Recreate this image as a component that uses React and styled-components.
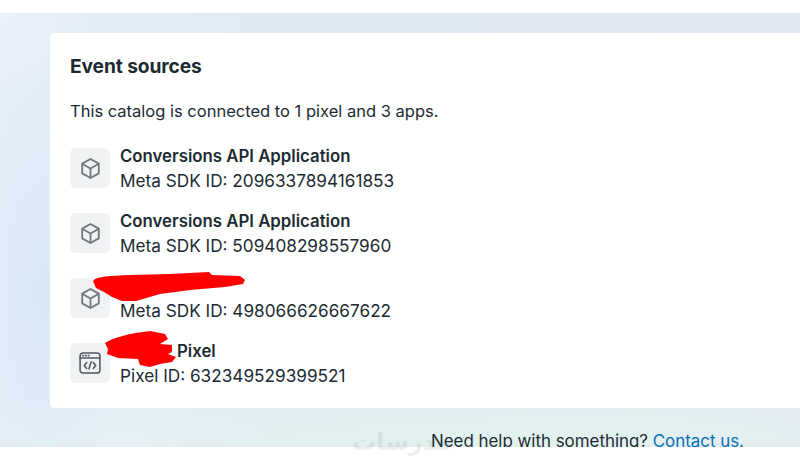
import React from 'react';
import styled, { createGlobalStyle } from 'styled-components'

const Global = createGlobalStyle`
  html, body {
    margin: 0;
    background: #fff;
  }
`

const Page = styled.div`
  position: relative;
  width: 800px;
  height: 460px;
  overflow: hidden;
  padding-top: 13px;
  box-sizing: border-box;
  font-family: Inter, "Noto Sans", sans-serif;
  color: #1c2b33;
`

const Backdrop = styled.div`
  height: 434px;
  overflow: hidden;
  padding: 20px 0 0 50px;
  box-sizing: border-box;
  background:
    radial-gradient(90px 90px at 0 0, #ebf0f9 0, rgba(235, 240, 249, 0) 100%),
    radial-gradient(90px 240px at 45px 280px, #dbe9f6 0, rgba(219, 233, 246, 0) 100%),
    radial-gradient(600px 80px at 65% 100%, #e3f2ee 0, rgba(227, 242, 238, 0) 100%),
    radial-gradient(220px 50px at 60px 100%, #e9f1f8 0, rgba(233, 241, 248, 0) 100%),
    linear-gradient(90deg, #e4eef7 0%, #dfe9f2 50%, #e3e9f4 100%);
`

const Card = styled.section`
  height: 375px;
  box-sizing: border-box;
  padding: 20px;
  background: #fff;
  border-radius: 4px 0 0 4px;
`

const Title = styled.h2`
  margin: 0;
  font-size: 19.2px;
  line-height: 27px;
  font-weight: 650;
  letter-spacing: -0.1px;
`

const Intro = styled.p`
  margin: 19px 0 21px;
  font-size: 16.5px;
  line-height: 24px;
`

const SourceList = styled.ul`
  list-style: none;
  margin: 0;
  padding: 0;
  display: flex;
  flex-direction: column;
  gap: 16px;
`

const SourceRow = styled.li`
  display: flex;
  align-items: flex-start;
  gap: 10px;
`

const IconTile = styled.div`
  width: 40px;
  height: 40px;
  margin-top: 4px;
  border-radius: 6px;
  background: #f1f2f4;
  color: #72797f;
  display: flex;
  align-items: center;
  justify-content: center;
`

const SourceText = styled.div`
  display: flex;
  flex-direction: column;
`

const SourceName = styled.span`
  height: 24px;
  font-size: 16.8px;
  line-height: 24px;
  font-weight: 600;
`

const PixelName = styled(SourceName)`
  padding-left: 57px;
`

const SourceId = styled.span`
  font-size: 17.2px;
  line-height: 25px;
`

const Help = styled.p`
  margin: 21px 0 0 381px;
  font-size: 16.9px;
  line-height: 24px;
  white-space: nowrap;
`

const HelpLink = styled.a`
  color: #0a70b8;
`

const Watermark = styled.span`
  position: absolute;
  left: 352px;
  top: 426px;
  font-family: "DejaVu Sans", sans-serif;
  font-size: 24px;
  line-height: 32px;
  font-weight: 700;
  color: rgba(120, 120, 120, 0.12);
`

const Scribble = styled.svg`
  position: absolute;
  left: 0;
  top: 0;
  pointer-events: none;
`

const BoxIcon = () => (
  <svg width="23" height="23" viewBox="0 0 20 20" fill="none" stroke="currentColor" strokeWidth="1.6" strokeLinejoin="round">
    <path d="M10 1.700 17.200 5.800v8.400L10 18.300 2.800 14.200V5.800z" />
    <path d="M2.800 5.800 10 10l7.200-4.200M10 10v8.300" />
  </svg>
)

const CodeIcon = () => (
  <svg width="22" height="22" viewBox="0 0 20 20" fill="none" stroke="#4f5760" strokeWidth="1.400" strokeLinecap="round" strokeLinejoin="round">
    <rect x="1" y="1" width="18" height="18" rx="2.500" />
    <path d="M1 5.500h18" />
    <path d="M3.500 3.300h.6M6 3.300h.6M8.500 3.300h.6" />
    <path d="M7 9.500 4.800 12.200 7 15M13 9.500l2.200 2.700L13 15M11 9l-2 6.500" />
  </svg>
)

const sources = [
  { icon: <BoxIcon />, name: 'Conversions API Application', id: 'Meta SDK ID: 2096337894161853' },
  { icon: <BoxIcon />, name: 'Conversions API Application', id: 'Meta SDK ID: 509408298557960' },
  { icon: <BoxIcon />, name: '', id: 'Meta SDK ID: 498066626667622' },
  { icon: <CodeIcon />, name: 'Pixel', id: 'Pixel ID: 632349529399521', indent: true },
]

export default function App() {
  return (
    <Page>
      <Global />
      <Backdrop>
        <Card>
          <Title>Event sources</Title>
          <Intro>This catalog is connected to 1 pixel and 3 apps.</Intro>
          <SourceList>
            {sources.map((source) => {
              const Name = source.indent ? PixelName : SourceName
              return (
                <SourceRow key={source.id}>
                  <IconTile>{source.icon}</IconTile>
                  <SourceText>
                    <Name>{source.name}</Name>
                    <SourceId>{source.id}</SourceId>
                  </SourceText>
                </SourceRow>
              )
            })}
          </SourceList>
        </Card>
        <Help>Need help with something? <HelpLink>Contact us.</HelpLink></Help>
      </Backdrop>
      <Watermark dir="rtl">مدرسات</Watermark>
      <Scribble width="800" height="460" viewBox="0 0 800 460">
        <path fill="#fe0000" d="M93 281C97 276 110 276 130 275L170 274 209 272 212 275 240 276 245 280 243 284 225 287 190 290 160 294 136 301 122 301 112 297 104 292 96 288Z" />
        <path fill="#fe0000" d="M105 343C112 338 130 333 150 331L165 334 168 339 160 344 172 345 172 352 168 354 176 357 172 362 160 364 150 367 140 365 138 359 118 358 107 354 108 349Z" />
      </Scribble>
    </Page>
  )
}
